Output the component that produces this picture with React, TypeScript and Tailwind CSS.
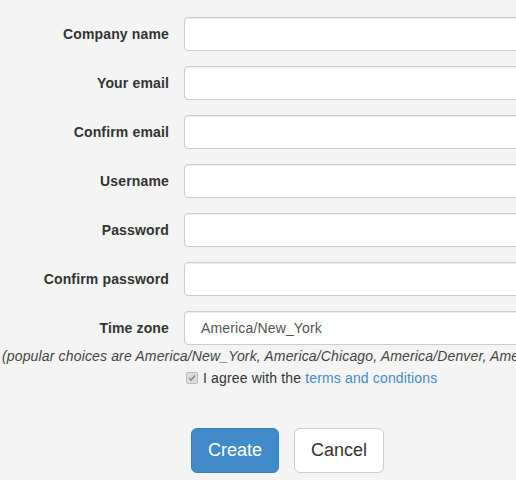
const fields = [
  "Company name",
  "Your email",
  "Confirm email",
  "Username",
  "Password",
  "Confirm password",
];

function Row({ label, children }: { label: string; children?: React.ReactNode }) {
  return (
    <div className="mb-[15px] flex items-center">
      <label className="w-[169px] shrink-0 text-right text-[14px] font-bold tracking-[0.15px] text-[#333]">{label}</label>
      <div className="ml-[15px] flex h-[34px] w-[400px] shrink-0 items-center rounded-[4px] border border-[#ccc] bg-white px-[16px] text-[14px] tracking-[0.15px] text-[#555] shadow-[inset_0_1px_1px_rgba(0,0,0,0.075)]">
        {children}
      </div>
    </div>
  );
}

export default function App() {
  return (
    <div
      className="h-[480px] w-[516px] overflow-hidden bg-[#f4f4f4] pt-[17px] text-[#333]"
      style={{ fontFamily: '"Liberation Sans", Arial, sans-serif' }}
    >
      {fields.map((f) => (
        <Row key={f} label={f} />
      ))}
      <Row label="Time zone">America/New_York</Row>
      {/* help text */}
      <p className="-mt-[14px] whitespace-nowrap pl-[2px] text-[14px] leading-[20px] tracking-[0.15px] italic text-[#444]">
        (popular choices are America/New_York, America/Chicago, America/Denver, America/Los_Angeles)
      </p>
      <div className="mt-[2px] flex items-center pl-[186px] text-[14px] leading-[20px] tracking-[0.15px]">
        <span className="flex h-[12px] w-[12px] items-center justify-center rounded-[2px] border border-[#bbb] bg-[#ddd]">
          <svg viewBox="0 0 12 12" className="h-[10px] w-[10px]">
            <path d="M2.5 6.2 L5 8.5 L9.5 3" fill="none" stroke="#888" strokeWidth="1.8" />
          </svg>
        </span>
        <span className="ml-[5px]">
          I agree with the <a className="text-[#428bca]">terms and conditions</a>
        </span>
      </div>
      {/* buttons */}
      <div className="mt-[40px] flex gap-[15px] pl-[191px]">
        <button className="h-[45px] w-[88px] rounded-[6px] border border-[#357ebd] bg-[#428bca] text-[18px] text-white">
          Create
        </button>
        <button className="h-[45px] w-[90px] rounded-[6px] border border-[#ccc] bg-white text-[18px] text-[#333]">
          Cancel
        </button>
      </div>
    </div>
  );
}
